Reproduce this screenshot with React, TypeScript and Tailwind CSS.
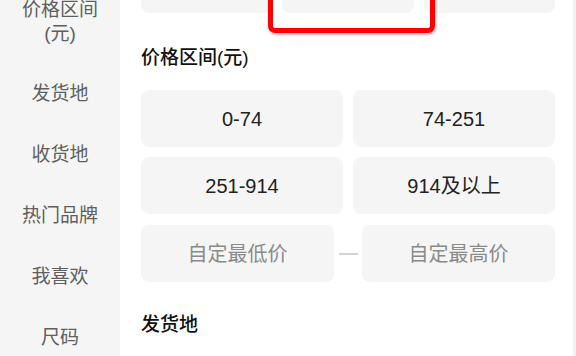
import React from "react";

// Filter panel - side menu of categories and the price range options
const sideItems = ["发货地", "收货地", "热门品牌", "我喜欢", "尺码"];
const priceRanges = ["0-74", "74-251", "251-914", "914及以上"];

const App = () => {
  return (
    <div
      className="w-[576px] h-[356px] overflow-hidden flex bg-white"
      style={{ fontFamily: '"Liberation Sans", "Noto Sans CJK SC", sans-serif' }}
    >
      {/* Side menu */}
      <div className="w-[120px] shrink-0 bg-[#f5f5f5] flex flex-col">
        <div className="-mt-[21px] h-[85px] shrink-0 flex flex-col items-center justify-center text-[19px] leading-[24px] text-[#5f5f5f]">
          <span>价格区间</span>
          <span>(元)</span>
        </div>
        {sideItems.map((item) => (
          <div
            key={item}
            className="h-[61px] shrink-0 flex items-center justify-center text-[19px] text-[#5f5f5f]"
          >
            {item}
          </div>
        ))}
      </div>

      {/* Options */}
      <div className="flex-1 pl-[21px] pr-[18px] flex flex-col">
        {/* Row above the fold, with the red highlight box */}
        <div className="relative -mt-[44px] grid grid-cols-3 gap-[10px]">
          <div className="h-[57px] rounded-[8px] bg-[#f5f5f5]" />
          <div className="h-[57px] rounded-[8px] bg-[#f5f5f5]" />
          <div className="h-[57px] rounded-[8px] bg-[#f5f5f5]" />
          <div className="absolute left-[127px] top-[10px] w-[167px] h-[67px] rounded-[7px] border-[5px] border-[#ff0000] shadow-[1px_2px_3px_rgba(0,0,0,0.25)]" />
        </div>

        <div className="pt-[34px] pb-[21px] text-[19px] leading-[22px] font-medium text-[#111]">
          价格区间(元)
        </div>

        <div className="grid grid-cols-2 gap-[10px]">
          {priceRanges.map((range) => (
            <div
              key={range}
              className="h-[57px] rounded-[8px] bg-[#f5f5f5] flex items-center justify-center text-[20px] text-[#222]"
            >
              {range}
            </div>
          ))}
        </div>

        <div className="mt-[11px] flex items-center">
          <div className="h-[57px] w-[193px] rounded-[8px] bg-[#f5f5f5] flex items-center justify-center text-[20px] text-[#8a8a8a]">
            自定最低价
          </div>
          <div className="flex-1 flex justify-center">
            <div className="w-[19px] h-[2px] bg-[#d4d4d4]" />
          </div>
          <div className="h-[57px] w-[193px] rounded-[8px] bg-[#f5f5f5] flex items-center justify-center text-[20px] text-[#8a8a8a]">
            自定最高价
          </div>
        </div>

        <div className="mt-[32px] text-[19px] leading-[22px] font-medium text-[#111]">
          发货地
        </div>
      </div>

      {/* Scroll strip */}
      <div className="w-[3px] shrink-0 bg-[#f2f2f2]" />
    </div>
  );
};

export default App;
